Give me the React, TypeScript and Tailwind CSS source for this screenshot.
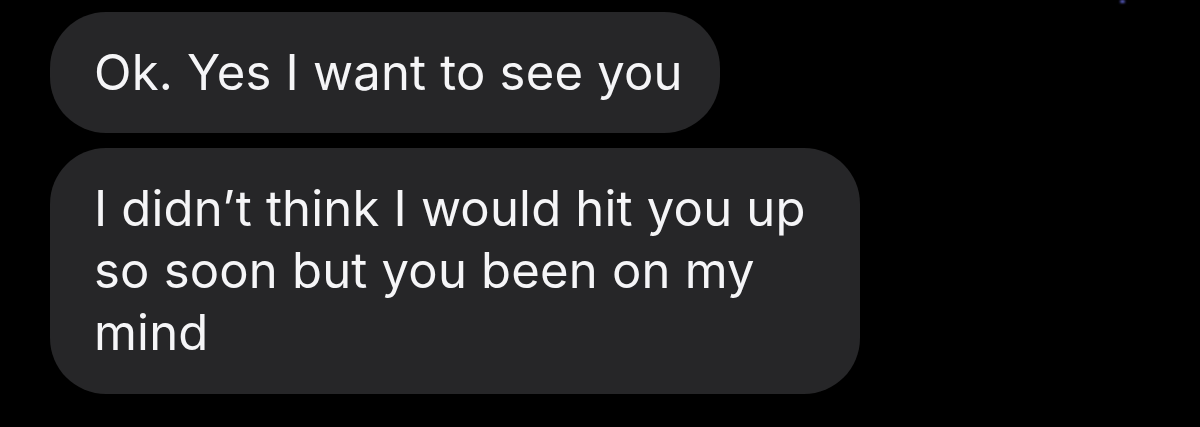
export default function App() {
  return (
    <div className="relative h-[427px] w-[1200px] overflow-hidden bg-black pl-[50px] pt-[12px] font-['Inter','Noto_Sans',sans-serif] text-[#f5f5f7]">
      <div className="absolute left-[1120px] top-0 h-[3px] w-[5px] rounded-full bg-[#5b5fc7] blur-[1px]" />
      <div className="flex flex-col gap-[15px]">
        <div className="w-[670px] whitespace-nowrap rounded-[56px] bg-[#262628] py-[30px] pl-[44px] pr-[20px] text-[49px] leading-[61px] tracking-[0.2px]">
          Ok. Yes I want to see you
        </div>
        <div className="w-[810px] rounded-[56px] bg-[#262628] py-[30px] pl-[44px] pr-[40px] text-[49px] leading-[62px] tracking-[0.2px]">
          I didn’t think I would hit you up so soon but you been on my mind
        </div>
      </div>
    </div>
  );
}
